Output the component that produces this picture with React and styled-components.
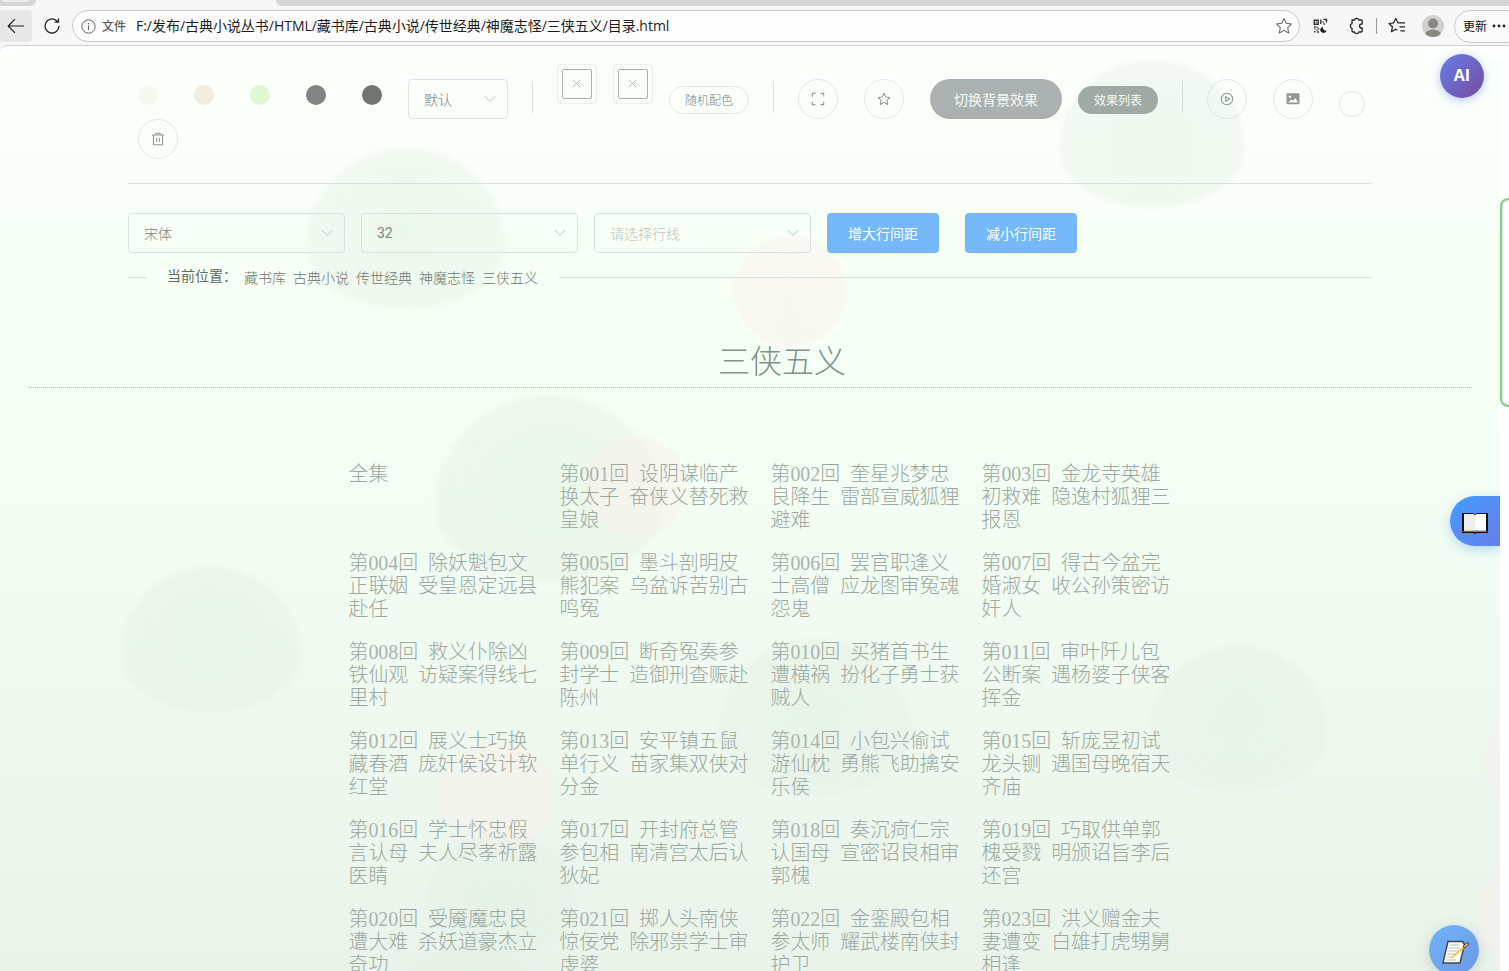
import React from 'react';
import styled, { createGlobalStyle } from 'styled-components';

const GlobalStyle = createGlobalStyle`
  * { box-sizing: border-box; }
  body { margin: 0; overflow: hidden; background: #fff; font-family: "Open Sans", "Noto Sans CJK SC", sans-serif; }
`;

const Window = styled.div`
  display: flex;
  flex-direction: column;
  height: 971px;
  overflow: hidden;
  background: #f7f7f7;
`;

/* ---------- browser frame ---------- */
const TabStrip = styled.div`
  display: flex;
  justify-content: space-between;
  flex: none;
  height: 6px;
  background: #f7f7f7;
`;
const TabEdge = styled.div`
  width: ${p => p.$w}px;
  background: #d5d5d5;
  border-radius: ${p => p.$radius};
  padding-left: 2px;
`;
const TabRemnant = styled.div`
  width: 27px;
  height: 2px;
  border-radius: 0 0 4px 4px;
  background: #ececec;
`;
const AddressRow = styled.div`
  display: flex;
  align-items: center;
  flex: none;
  height: 39px;
  padding-top: 1px;
`;
const BackButton = styled.div`
  display: flex;
  align-items: center;
  justify-content: center;
  width: 32px;
  height: 32px;
  border-radius: 0 4px 4px 0;
  background: #e7e7e7;
`;
const IconSlot = styled.div`
  display: flex;
  flex: none;
  align-items: center;
  justify-content: center;
  width: ${p => p.$w}px;
`;
const AddressBar = styled.div`
  display: flex;
  align-items: center;
  width: 1228px;
  height: 32px;
  padding: 0 6px 0 8px;
  border: 1px solid #c9c9c9;
  border-radius: 16px;
  background: #fdfdfd;
`;
const Scheme = styled.span`
  width: 26px;
  margin-left: 6px;
  padding-bottom: 1px;
  font-size: 12px;
  font-weight: 500;
  color: #5c5c5c;
`;
const Url = styled.span`
  flex: 1;
  margin-left: 8px;
  padding-bottom: 2px;
  font-size: 14px;
  letter-spacing: -0.03px;
  white-space: nowrap;
  color: #1c1c1c;
`;
const Avatar = styled.div`
  width: 22px;
  height: 22px;
  margin: 0 10px 0 9px;
`;
const UpdateButton = styled.div`
  display: flex;
  align-items: center;
  gap: 5px;
  width: 70px;
  height: 33px;
  margin-right: -15px;
  padding-left: 8px;
  padding-bottom: 1px;
  border: 1px solid #c9c9c9;
  border-radius: 17px;
  background: #f9f9f9;
  font-size: 12px;
  color: #111;
  white-space: nowrap;
`;

/* ---------- page ---------- */
const Viewport = styled.div`
  display: flex;
  flex: 1;
  min-height: 0;
  border-top: 1px solid #cfcfcf;
  border-radius: 8px 0 0 0;
  background: #fff;
  overflow: hidden;
`;
const Page = styled.main`
  position: relative;
  width: 1500px;
  height: 100%;
  overflow: hidden;
  background: linear-gradient(180deg, #fcfffc 0%, #f9fff8 14%, #f5fff5 38%, #ebf5ec 92%, #e9f3ea 100%);
`;
const ScrollTrack = styled.div`
  flex: none;
  width: 9px;
  padding-top: 152px;
  overflow: hidden;
`;
const ScrollThumb = styled.div`
  width: 18px;
  height: 209px;
  border: 2px solid #8dc891;
  border-radius: 8px;
  box-shadow: inset 0 0 3px rgba(90, 160, 95, .6);
`;
const Blob = styled.div`
  position: absolute;
  left: ${p => p.$x}px;
  top: ${p => p.$y - 46}px;
  width: ${p => p.$w}px;
  height: ${p => p.$h}px;
  border-radius: ${p => (p.$pink ? '50%' : '50% 50% 50% 50% / 60% 60% 40% 40%')};
  background: ${p => (p.$pink
    ? 'radial-gradient(circle, rgba(250,240,238,.5), rgba(251,238,234,.42))'
    : 'radial-gradient(circle at 50% 48%, rgba(222,240,222,.44), rgba(226,238,226,.37) 45%, rgba(228,238,227,.34))')};
  filter: blur(2px);
`;
const Content = styled.div`
  position: relative;
  padding: 18px 128px 0;
`;
const ToolRow = styled.div`
  display: flex;
  align-items: flex-start;
  height: ${p => p.$h || 55}px;
  padding-left: 10px;
`;
const Swatch = styled.div`
  flex: none;
  width: 20px;
  height: 20px;
  margin: 21px 36px 0 0;
  border-radius: 50%;
  background: ${p => p.$color};
`;
const SelectBox = styled.div`
  display: flex;
  flex: none;
  align-items: center;
  justify-content: space-between;
  width: ${p => p.$w}px;
  height: 40px;
  margin: ${p => p.$m || '0'};
  padding: 0 11px 1px 15px;
  border: 1px solid rgba(190, 200, 205, .5);
  border-radius: 4px;
  font-size: 14px;
  font-weight: 300;
  color: ${p => (p.$placeholder ? '#bcc4c0' : '#7b857f')};
`;
const Digits = styled.span`
  font-family: Roboto, "Liberation Sans", sans-serif;
  font-weight: 400;
`;
const VLine = styled.div`
  flex: none;
  width: 1px;
  height: 32px;
  margin: 17px 24px 0;
  background: rgba(175, 190, 190, .45);
`;
const PickerBox = styled.div`
  display: flex;
  flex: none;
  width: 40px;
  height: 40px;
  margin-right: 16px;
  padding: 4px;
  border: 1px solid #e9eee9;
  border-radius: 4px;
`;
const PickerInner = styled.div`
  display: flex;
  flex: 1;
  align-items: center;
  justify-content: center;
  padding: 0 1px 1px 0;
  border: 1px solid #a9b0aa;
  border-radius: 2px;
`;
const Pill = styled.div`
  display: flex;
  flex: none;
  align-items: center;
  justify-content: center;
  width: ${p => (p.$large ? 132 : 80)}px;
  height: ${p => (p.$large ? 40 : 28)}px;
  margin: ${p => (p.$large ? '15px 16px 0 0' : '22px 0 0')};
  padding-bottom: ${p => (p.$large ? 1 : 0)}px;
  border: 1px solid ${p => (p.$fill ? 'transparent' : '#e1e7e3')};
  border-radius: 20px;
  background: ${p => p.$fill || 'transparent'};
  background-clip: border-box;
  background-origin: border-box;
  font-size: ${p => (p.$large ? 14 : 12)}px;
  font-weight: ${p => (p.$fill ? 400 : 300)};
  color: ${p => (p.$fill ? '#f6faf6' : '#7b857f')};
`;
const RoundButton = styled.div`
  display: flex;
  flex: none;
  align-items: center;
  justify-content: center;
  width: ${p => p.$size || 40}px;
  height: ${p => p.$size || 40}px;
  margin: ${p => (p.$flush ? '0' : p.$size ? '27px 0 0' : '15px 26px 0 0')};
  border: 1px solid rgba(200, 210, 210, .5);
  border-radius: 50%;
  color: #8f9893;
`;
const Rule = styled.div`
  height: 1px;
  margin-top: 24px;
  background: rgba(180, 192, 188, .45);
`;
const ControlRow = styled.div`
  display: flex;
  gap: 16px;
  margin-top: 29px;
`;
const PrimaryButton = styled.div`
  display: flex;
  align-items: center;
  justify-content: center;
  width: 112px;
  height: 40px;
  margin-right: 10px;
  padding-bottom: 1px;
  border-radius: 4px;
  background: #75b9fa;
  font-size: 14px;
  color: #fff;
`;
const Breadcrumb = styled.nav`
  display: flex;
  align-items: center;
  height: 24px;
  margin-top: 12px;
  font-size: 14px;
  font-weight: 300;
  line-height: 24px;
  white-space: nowrap;
`;
const CrumbLine = styled.span`
  width: ${p => (p.$w ? `${p.$w}px` : 'auto')};
  flex: ${p => (p.$w ? 'none' : '1')};
  height: 1px;
  background: rgba(180, 192, 188, .45);
`;
const CrumbLabel = styled.span`
  width: 77px;
  margin-left: 20px;
  padding-bottom: 2px;
  font-weight: 400;
  color: #626b65;
`;
const Crumb = styled.a`
  margin-right: ${p => (p.$last ? 21 : 7)}px;
  padding-top: 1px;
  color: #6c766f;
`;
const Title = styled.h1`
  margin: 49px -100px 0;
  height: 50px;
  border-bottom: 1px dotted #c5c096;
  font-size: 32px;
  font-weight: 300;
  line-height: 46px;
  text-align: center;
  text-indent: 64px;
  color: #84918b;
`;
const ChapterGrid = styled.div`
  display: grid;
  grid-template-columns: repeat(4, 191px);
  column-gap: 20px;
  row-gap: 20px;
  margin: 75px 0 0 220.5px;
`;
const Chapter = styled.a`
  min-height: 69px;
  font-family: "Liberation Serif", "Noto Sans CJK SC", serif;
  font-size: 19.9px;
  font-weight: 300;
  line-height: 23px;
  word-spacing: 5px;
  color: #9ca7a0;
`;
const ChapterNumber = styled.span`
  color: #aab4ad;
`;
const AiButton = styled.div`
  position: absolute;
  left: 1440px;
  top: 8px;
  display: flex;
  align-items: center;
  justify-content: center;
  width: 44px;
  height: 44px;
  padding-bottom: 2px;
  border-radius: 50%;
  background: linear-gradient(135deg, #667eea, #764ba2);
  box-shadow: 0 2px 10px rgba(102, 126, 234, .45);
  font-size: 16px;
  font-weight: 700;
  color: #fff;
`;
const BookTab = styled.div`
  position: absolute;
  right: 0;
  top: 450px;
  display: flex;
  align-items: center;
  justify-content: center;
  width: 50px;
  height: 50px;
  padding-top: 3px;
  border-radius: 25px 0 0 25px;
  background: linear-gradient(135deg, #409eff, #667eea);
  box-shadow: 0 4px 12px rgba(64, 158, 255, .35);
`;
const NoteButton = styled.div`
  position: absolute;
  left: 1429px;
  top: 879px;
  display: flex;
  align-items: center;
  justify-content: center;
  width: 50px;
  height: 50px;
  padding: 3px 0 0 1px;
  border-radius: 50%;
  background: linear-gradient(135deg, #6fb4fb, #6d97e6);
  box-shadow: 0 3px 14px rgba(90, 110, 100, .25);
`;

const Svg = ({ s = 16, vb = 16, children, ...rest }) => (
  <svg width={s} height={s} viewBox={`0 0 ${vb} ${vb}`} fill="none" stroke="currentColor" strokeWidth="1" strokeLinejoin="round" {...rest}>{children}</svg>
);
const Chevron = () => <Svg s={12} vb={12} stroke="#b9c3be"><path d="M.8 3.2 6 8.4l5.2-5.2" /></Svg>;
const STAR = 'M8 1.3l2 4.3 4.7.6-3.4 3.3.9 4.7L8 11.9l-4.2 2.3.9-4.7L1.300 6.200 6 5.600z';
const BackIcon = () => <Svg s={18} vb={18} stroke="#222" strokeWidth="1.2"><path d="M17 9H1.500M8 2.200 1.200 9 8 15.800" /></Svg>;
const ReloadIcon = () => <Svg s={18} vb={18} stroke="#222" strokeWidth="1.3"><path d="M16 9a7 7 0 1 1-2.300-5.200L15.500 5M15.500 1.500V5.200H11.600" /></Svg>;
const InfoIcon = () => <Svg s={15} vb={15} stroke="#666"><circle cx="7.5" cy="7.500" r="6.700" /><path d="M7.500 6.500v4.500M7.500 4v1.300" strokeWidth="1.200" /></Svg>;
const QrIcon = () => (
  <Svg s={16} stroke="#333" strokeWidth="1.400" strokeLinejoin="miter">
    <rect x="0" y="0" width="16" height="16" rx="1" fill="#fff" stroke="#e3e3e3" strokeWidth=".6" />
    <path d="M2.200 2.200h4v4h-4zM3.700 4.200h1M8.800 1.500v4.600M11.500 1.500h3v3M13 6h-1.500M11 3.500v1.200" />
    <path d="M2 9h1.600M5 8.500v1.500M6.500 10v1.500M2 13.800h1.600M4.500 12h1M5 14h2M2.500 11h1" />
    <path d="M11.200 8.400a3.100 3.100 0 1 0 3.600 4.100 2.900 2.900 0 0 1-3.600-4.100z" fill="#222" stroke="none" />
    <path d="M8.500 10.500a3 3 0 0 0 5.800 2.300c-2 .5-3.600-.8-3.300-3.300z" fill="#222" stroke="none" />
  </Svg>
);
const PuzzleIcon = () => <Svg s={18} vb={18} stroke="#222" strokeWidth="1.300"><path d="M4 3H6.500a2.300 2.300 0 0 1 4.400 0h2.300a1 1 0 0 1 1 1v3h-.6a2 2 0 0 0 0 4h.6v3a1 1 0 0 1-1 1h-2.300a2.300 2.300 0 0 1-4.400 0H5a1 1 0 0 1-1-1v-2.700a2.400 2.400 0 0 1 0-4.600z" /></Svg>;
const FavoritesIcon = () => <Svg s={18} vb={18} stroke="#222" strokeWidth="1.200"><path d="M9.500 13.200 7.800 12.200l-4.400 2.600 1-5L1 6.500l4.700-.7L7.800 1.500l2.100 4.300H17M11.500 9.900H17M12.500 13.800H17" /></Svg>;

const swatches = ['#f6f9ef', '#f2ebe0', '#def6d2', '#7e8583', '#6f766f'];
const crumbs = ['藏书库', '古典小说', '传世经典', '神魔志怪', '三侠五义'];
const blobs = [
  { x: 306, y: 148, w: 200, h: 161 }, { x: 1059, y: 59, w: 186, h: 149 },
  { x: 734, y: 236, w: 112, h: 111, pink: true }, { x: 435, y: 395, w: 228, h: 185 },
  { x: 586, y: 437, w: 101, h: 99, pink: true }, { x: 121, y: 567, w: 180, h: 145 },
  { x: 719, y: 639, w: 193, h: 156 }, { x: 1149, y: 646, w: 179, h: 146 },
  { x: 441, y: 740, w: 113, h: 112, pink: true }, { x: 425, y: 833, w: 151, h: 120 },
  { x: 386, y: 946, w: 170, h: 136 }, { x: 1484, y: 716, w: 94, h: 92, pink: true },
  { x: 1478, y: 856, w: 120, h: 120, pink: true },
];
const chapters = [
  '全集', '第001回 设阴谋临产换太子 奋侠义替死救皇娘', '第002回 奎星兆梦忠良降生 雷部宣威狐狸避难', '第003回 金龙寺英雄初救难 隐逸村狐狸三报恩',
  '第004回 除妖魁包文正联姻 受皇恩定远县赴任', '第005回 墨斗剖明皮熊犯案 乌盆诉苦别古鸣冤', '第006回 罢官职逢义士高僧 应龙图审冤魂怨鬼', '第007回 得古今盆完婚淑女 收公孙策密访奸人',
  '第008回 救义仆除凶铁仙观 访疑案得线七里村', '第009回 断奇冤奏参封学士 造御刑查赈赴陈州', '第010回 买猪首书生遭横祸 扮化子勇士获贼人', '第011回 审叶阡儿包公断案 遇杨婆子侠客挥金',
  '第012回 展义士巧换藏春酒 庞奸侯设计软红堂', '第013回 安平镇五鼠单行义 苗家集双侠对分金', '第014回 小包兴偷试游仙枕 勇熊飞助擒安乐侯', '第015回 斩庞昱初试龙头铡 遇国母晚宿天齐庙',
  '第016回 学士怀忠假言认母 夫人尽孝祈露医睛', '第017回 开封府总管参包相 南清宫太后认狄妃', '第018回 奏沉疴仁宗认国母 宣密诏良相审郭槐', '第019回 巧取供单郭槐受戮 明颁诏旨李后还宫',
  '第020回 受魇魔忠良遭大难 杀妖道豪杰立奇功', '第021回 掷人头南侠惊佞党 除邪祟学士审虔婆', '第022回 金銮殿包相参太师 耀武楼南侠封护卫', '第023回 洪义赠金夫妻遭变 白雄打虎甥舅相逢',
];

function BrowserBar() {
  return (
    <>
      <TabStrip>
        <TabEdge $w={36} $radius="0 0 8px 0"><TabRemnant /></TabEdge>
        <TabEdge $w={1233} $radius="0 0 0 8px" />
      </TabStrip>
      <AddressRow>
        <BackButton><BackIcon /></BackButton>
        <IconSlot $w={40}><ReloadIcon /></IconSlot>
        <AddressBar>
          <InfoIcon />
          <Scheme>文件</Scheme>
          <Url>F:/发布/古典小说丛书/HTML/藏书库/古典小说/传世经典/神魔志怪/三侠五义/目录.html</Url>
          <Svg s={18} stroke="#666" strokeWidth=".9"><path d={STAR} /></Svg>
        </AddressBar>
        <IconSlot $w={40}><QrIcon /></IconSlot>
        <IconSlot $w={34}><PuzzleIcon /></IconSlot>
        <IconSlot $w={5}><svg width="1" height="16"><rect width="1" height="16" fill="#999" /></svg></IconSlot>
        <IconSlot $w={36}><FavoritesIcon /></IconSlot>
        <Avatar style={{ marginLeft: 7 }}>
          <svg width="22" height="22" viewBox="0 0 22 22"><defs><clipPath id="av"><circle cx="11" cy="11" r="11" /></clipPath></defs><g clipPath="url(#av)"><rect width="22" height="22" fill="#d2d0ce" /><circle cx="11" cy="8.500" r="5" fill="#8a8681" /><ellipse cx="11" cy="20" rx="8" ry="5.500" fill="#8a8681" /></g></svg>
        </Avatar>
        <UpdateButton>
          更新
          <svg width="14" height="4" viewBox="0 0 14 4" fill="#222"><circle cx="2" cy="2" r="1.400" /><circle cx="7" cy="2" r="1.400" /><circle cx="12" cy="2" r="1.400" /></svg>
        </UpdateButton>
      </AddressRow>
    </>
  );
}

function BrokenPicker() {
  return <PickerBox><PickerInner><Svg s={9} vb={9} stroke="#b9c0ba"><path d="M.7.7l7.600 7.600M8.300.7.7 8.300" /></Svg></PickerInner></PickerBox>;
}

function Tools() {
  return (
    <>
      <ToolRow>
        {swatches.map(c => <Swatch key={c} $color={c} />)}
        <SelectBox $w={100} $m="15px 0 0 -10px">默认<Chevron /></SelectBox>
        <VLine />
        <BrokenPicker /><BrokenPicker />
        <Pill>随机配色</Pill>
        <VLine />
        <RoundButton><Svg s={14}><path d="M1.500 5V1.500H5M11 1.500h3.500V5M14.500 11v3.500H11M5 14.500H1.500V11" strokeWidth="1.300" /></Svg></RoundButton>
        <RoundButton><Svg s={14} strokeWidth="1.200"><path d={STAR} /></Svg></RoundButton>
        <Pill $large $fill="#abb1b1">切换背景效果</Pill>
        <Pill $fill="#a0aaa5">效果列表</Pill>
        <VLine />
        <RoundButton><Svg s={14} strokeWidth="1.200"><circle cx="8" cy="8" r="6.500" /><path d="M6.500 5.300 10.800 8l-4.300 2.700z" /></Svg></RoundButton>
        <RoundButton>
          <svg width="14" height="14" viewBox="0 0 14 14"><rect x=".5" y="1.300" width="13" height="11" rx="1" fill="#8f9893" /><circle cx="4" cy="4.700" r="1.200" fill="#f6fcf6" /><path d="M2.200 10.500 5 7.500l1.800 1.300L9.500 6l2.400 4.500z" fill="#f6fcf6" /></svg>
        </RoundButton>
        <RoundButton $size={26} />
      </ToolRow>
      <ToolRow $h={40}>
        <RoundButton $flush><Svg s={14} strokeWidth="1.200"><path d="M1 3.500h14M5.500 3.300V1.500h5v1.800M2.800 3.500v11h10.400v-11M6.500 6.500v5M9.500 6.500v5" /></Svg></RoundButton>
      </ToolRow>
    </>
  );
}

function ChapterLink({ title }) {
  const digits = title.match(/^第(\d+)(.*)$/);
  if (!digits) return <Chapter>{title}</Chapter>;
  return <Chapter>第<ChapterNumber>{digits[1]}</ChapterNumber>{digits[2]}</Chapter>;
}

export default function App() {
  return (
    <Window>
      <GlobalStyle />
      <BrowserBar />
      <Viewport>
        <Page>
          {blobs.map((b, i) => <Blob key={i} $x={b.x} $y={b.y} $w={b.w} $h={b.h} $pink={b.pink} />)}
          <Content>
            <Tools />
            <Rule />
            <ControlRow>
              <SelectBox $w={217}>宋体<Chevron /></SelectBox>
              <SelectBox $w={217}><Digits>32</Digits><Chevron /></SelectBox>
              <SelectBox $w={217} $placeholder>请选择行线<Chevron /></SelectBox>
              <PrimaryButton>增大行间距</PrimaryButton>
              <PrimaryButton>减小行间距</PrimaryButton>
            </ControlRow>
            <Breadcrumb>
              <CrumbLine $w={19} />
              <CrumbLabel>当前位置：</CrumbLabel>
              {crumbs.map((c, i) => <Crumb key={c} $last={i === crumbs.length - 1}>{c}</Crumb>)}
              <CrumbLine />
            </Breadcrumb>
            <Title>三侠五义</Title>
            <ChapterGrid>
              {chapters.map(c => <ChapterLink key={c} title={c} />)}
            </ChapterGrid>
          </Content>
          <AiButton>AI</AiButton>
          <BookTab>
            <svg width="28" height="24" viewBox="0 0 28 24"><path d="M1 2h11l2 1.300L16 2h11v20H15.500L14 23l-1.500-1H1z" fill="#111" /><path d="M2 20.500h24" stroke="#2b7fc0" /><path d="M3 3h9.500L14 4.200V20l-1.500-1H3z" fill="#eee" /><path d="M25 3h-9.500L14 4.200V20l1.500-1H25z" fill="#fff" /><path d="M3 19.500h9.500l1.500.9 1.500-.9H25" stroke="#ccc" fill="none" /></svg>
          </BookTab>
          <NoteButton>
            <svg width="28" height="26" viewBox="0 0 28 26"><path d="M7 2.500h14.500l2 3L19 24H2z" fill="#fbfbf8" stroke="#444" strokeWidth="1.400" /><path d="M9 6h9M8 9h11M7.500 12h9M6.500 15h8M6 18h6M5 21h10" stroke="#bbb" /><path d="M10 19 25 6.500" stroke="#f5c84c" strokeWidth="2" /><path d="m23.500 7.500 3-2.500" stroke="#444" strokeWidth="3.200" strokeLinecap="round" /><path d="m23.800 7.300 2.500-2.100" stroke="#e8a79a" strokeWidth="1.800" strokeLinecap="round" /></svg>
          </NoteButton>
        </Page>
        <ScrollTrack><ScrollThumb /></ScrollTrack>
      </Viewport>
    </Window>
  );
}
